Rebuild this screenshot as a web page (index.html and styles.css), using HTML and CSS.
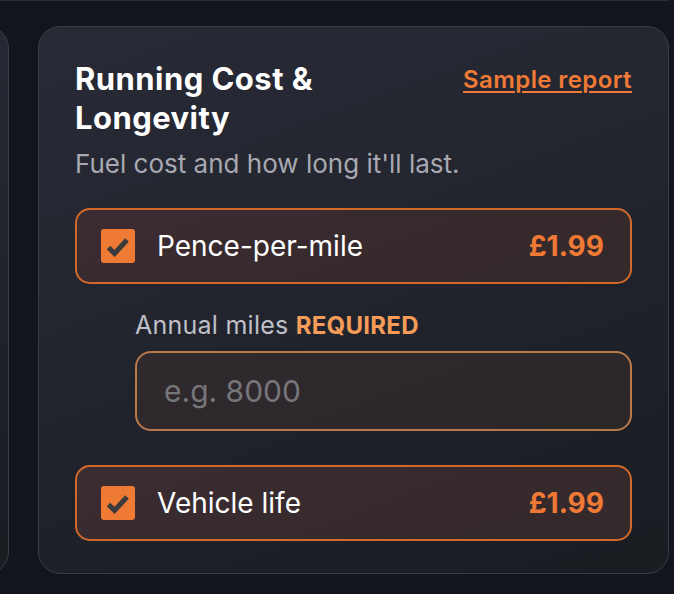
FILE: index.html
```html
<!DOCTYPE html>
<html lang="en">
<head>
<meta charset="utf-8">
<title>Running Cost &amp; Longevity</title>
<link rel="stylesheet" href="styles.css">
</head>
<body>
<div class="topline"></div>
<div class="row-wrap">
  <div class="card card-prev"></div>
  <section class="card card-main">
    <header class="head">
      <h2 class="title">Running Cost &amp;<br>Longevity</h2>
      <a class="sample" href="#">Sample report</a>
    </header>
    <p class="sub">Fuel cost and how long it'll last.</p>

    <label class="option">
      <span class="check"><svg viewBox="0 0 34 34" width="34" height="34"><polyline points="7.5,18.5 13.5,24.5 26,11" fill="none" stroke="#3b3b3d" stroke-width="5"/></svg></span>
      <span class="opt-name">Pence-per-mile</span>
      <span class="price">£1.99</span>
    </label>

    <div class="field">
      <div class="field-label">Annual miles <span class="req">REQUIRED</span></div>
      <div class="input"><span class="ph">e.g. 8000</span></div>
    </div>

    <label class="option">
      <span class="check"><svg viewBox="0 0 34 34" width="34" height="34"><polyline points="7.5,18.5 13.5,24.5 26,11" fill="none" stroke="#3b3b3d" stroke-width="5"/></svg></span>
      <span class="opt-name">Vehicle life</span>
      <span class="price">£1.99</span>
    </label>
  </section>
</div>
</body>
</html>
```

FILE: styles.css
```css
* { box-sizing: border-box; }
html, body {
  margin: 0;
  padding: 0;
  height: 100%;
}
body {
  background: #13151c;
  font-family: Inter, "Noto Sans", sans-serif;
  color: #fff;
  overflow: hidden;
}
.topline {
  height: 1px;
  margin-right: 5px;
  background: #2a2d36;
}
.row-wrap {
  display: flex;
  justify-content: flex-end;
  gap: 29px;
  padding-top: 25px;
  padding-right: 5px;
}
.card {
  flex-shrink: 0;
  border: 1.5px solid #3a3d46;
  border-radius: 22px;
  background: linear-gradient(160deg, #282a36 0%, #21232c 55%, #1a1c22 100%);
}
.card-prev {
  width: 300px;
  height: 548px;
}
.card-main {
  width: 631px;
  height: 548px;
  padding: 32px 36px 0 36px;
  display: flex;
  flex-direction: column;
}
.head {
  display: flex;
  justify-content: space-between;
  align-items: flex-start;
}
.title {
  margin: 0;
  font-size: 31px;
  line-height: 39px;
  font-weight: 700;
  letter-spacing: 0.45px;
  color: #fff;
}
.sample {
  margin-top: 6px;
  color: #f07a35;
  font-size: 24px;
  line-height: 30px;
  font-weight: 600;
  letter-spacing: 0.4px;
  text-decoration: underline;
  text-decoration-thickness: 2px;
  text-underline-offset: 3px;
}
.sub {
  margin: 11px 0 0 0;
  font-size: 26px;
  line-height: 32px;
  color: #a8a9b2;
}
.option {
  display: flex;
  align-items: center;
  height: 76px;
  margin-top: 28px;
  padding: 0 26px 0 24px;
  border: 2px solid #d2692b;
  border-radius: 15px;
  background: linear-gradient(160deg, #3b2c31 0%, #362a2d 60%, #33282a 100%);
}
.check {
  width: 34px;
  height: 34px;
  border-radius: 3px;
  background: #ef7a33;
  display: flex;
}
.opt-name {
  margin-left: 22px;
  flex: 1;
  font-size: 28px;
  color: #fff;
}
.price {
  font-size: 28px;
  font-weight: 700;
  color: #f07a35;
}
.field {
  margin: 26px 0 0 60px;
}
.field-label {
  font-size: 25px;
  line-height: 30px;
  letter-spacing: 0.25px;
  color: #bfc0c8;
}
.req {
  color: #f49c58;
  font-weight: 700;
  font-size: 24px;
}
.input {
  margin-top: 10px;
  height: 80px;
  border: 2px solid #b9794a;
  border-radius: 16px;
  background: linear-gradient(160deg, #302a2f 0%, #2b2628 100%);
  display: flex;
  align-items: center;
  padding-left: 27px;
}
.ph {
  font-size: 30px;
  color: #76767a;
}
.field + .option {
  margin-top: 34px;
}
```
